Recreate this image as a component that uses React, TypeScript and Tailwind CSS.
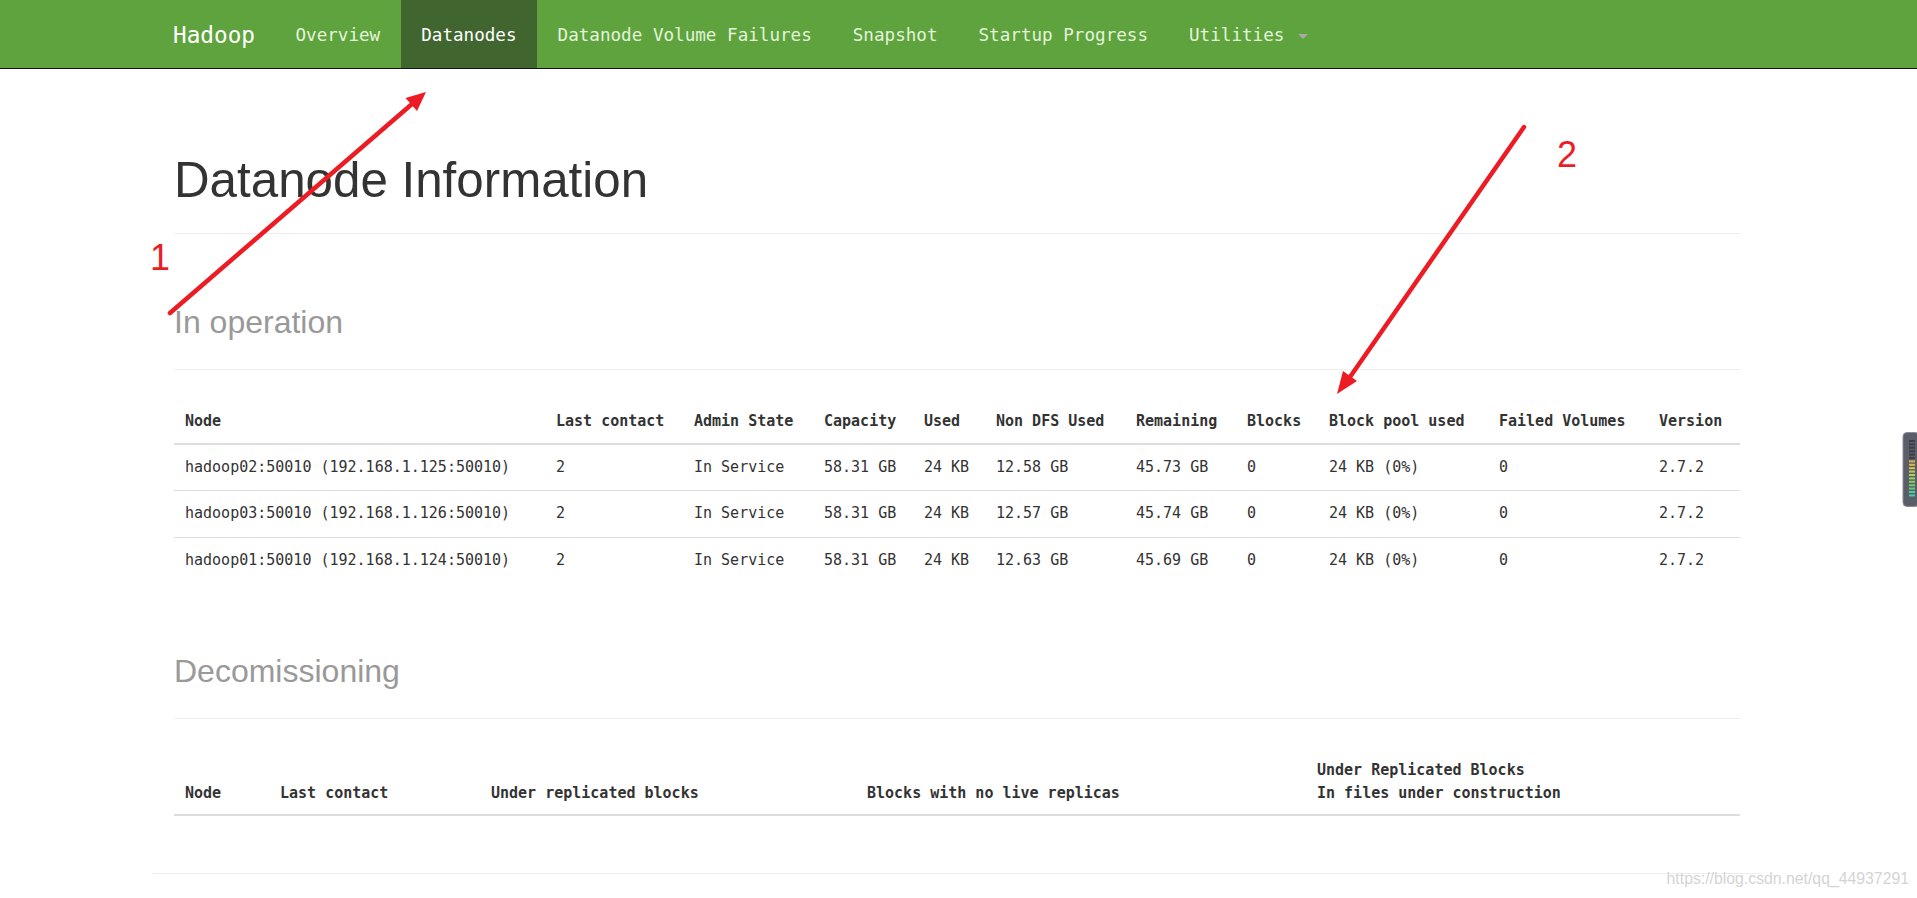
import React from 'react';

const mono = { fontFamily: '"DejaVu Sans Mono", "Liberation Mono", monospace' };
const sans = { fontFamily: '"Liberation Sans", Arial, Helvetica, sans-serif' };

const navItems = ['Overview', 'Datanodes', 'Datanode Volume Failures', 'Snapshot', 'Startup Progress'];

const liveCols = [
  { label: 'Node', w: 'w-[371px]' },
  { label: 'Last contact', w: 'w-[138px]' },
  { label: 'Admin State', w: 'w-[130px]' },
  { label: 'Capacity', w: 'w-[100px]' },
  { label: 'Used', w: 'w-[72px]' },
  { label: 'Non DFS Used', w: 'w-[140px]' },
  { label: 'Remaining', w: 'w-[111px]' },
  { label: 'Blocks', w: 'w-[82px]' },
  { label: 'Block pool used', w: 'w-[170px]' },
  { label: 'Failed Volumes', w: 'w-[160px]' },
  { label: 'Version', w: 'w-[92px]' },
];

const nodes = [
  ['hadoop02:50010 (192.168.1.125:50010)', '2', 'In Service', '58.31 GB', '24 KB', '12.58 GB', '45.73 GB', '0', '24 KB (0%)', '0', '2.7.2'],
  ['hadoop03:50010 (192.168.1.126:50010)', '2', 'In Service', '58.31 GB', '24 KB', '12.57 GB', '45.74 GB', '0', '24 KB (0%)', '0', '2.7.2'],
  ['hadoop01:50010 (192.168.1.124:50010)', '2', 'In Service', '58.31 GB', '24 KB', '12.63 GB', '45.69 GB', '0', '24 KB (0%)', '0', '2.7.2'],
];

const leds = [
  '#3b3e47', '#3b3e47', '#3b3e47', '#3b3e47', '#3b3e47', '#3b3e47',
  '#d8b445', '#d6bd47', '#cfc64a', '#bfcc4d', '#aed253', '#98d259',
  '#86d160', '#72d06c', '#5ecf82', '#4dcf98', '#3fcfae',
];

function Navbar() {
  return (
    <nav className="h-[69px] bg-[#5fa33e] border-b border-[#151515]" style={mono}>
      <div className="ml-[153px] flex h-[68px] items-stretch">
        <a className="flex items-center px-[20px] pt-[3px] text-[22.7px] text-white">Hadoop</a>
        {navItems.map((item) => (
          <a
            key={item}
            className={`flex items-center px-[20.5px] pt-[3px] text-[17.6px] ${
              item === 'Datanodes' ? 'bg-[#41652f] text-white' : 'text-[#e4f3da]'
            }`}
          >
            {item}
          </a>
        ))}
        <a className="flex items-center px-[20.5px] pt-[3px] text-[17.6px] text-[#e4f3da]">
          Utilities
          <span className="ml-[14px] mt-[2px] h-0 w-0 border-x-[5.5px] border-t-[5.5px] border-x-transparent border-t-[#a9a9a9]" />
        </a>
      </div>
    </nav>
  );
}

function PageHeader({ children, small }: { children: React.ReactNode; small?: boolean }) {
  return (
    <div className="border-b border-[#eeeeee] pb-[26px]" style={sans}>
      <h1 className="h-[54px] text-[49.3px] font-normal leading-[54px] text-[#333333]">
        {small ? <span className="text-[32px] leading-none text-[#999999]">{children}</span> : children}
      </h1>
    </div>
  );
}

export default function App() {
  return (
    <div className="relative h-[898px] overflow-hidden bg-white text-[#333333]">
      <Navbar />

      <div className="ml-[153px] w-[1608px] px-[21px]">
        <div className="mt-[84px]">
          <PageHeader>Datanode Information</PageHeader>
        </div>

        <div className="mt-[55px]">
          <PageHeader small>In operation</PageHeader>
        </div>

        <table className="mt-[27px] w-full table-fixed border-collapse text-[15px]" style={mono}>
          <thead>
            <tr>
              {liveCols.map((c) => (
                <th
                  key={c.label}
                  className={`${c.w} border-b-2 border-[#dddddd] px-[11px] pt-[13px] pb-[9px] text-left align-bottom font-bold leading-[23.5px] whitespace-nowrap`}
                >
                  {c.label}
                </th>
              ))}
            </tr>
          </thead>
          <tbody>
            {nodes.map((row, i) => (
              <tr key={i}>
                {row.map((cell, j) => (
                  <td
                    key={j}
                    className={`px-[11px] py-[11px] leading-[23.5px] whitespace-nowrap ${
                      i === 0 ? '' : 'border-t border-[#dddddd]'
                    }`}
                  >
                    {cell}
                  </td>
                ))}
              </tr>
            ))}
          </tbody>
        </table>

        <div className="mt-[55px]">
          <PageHeader small>Decomissioning</PageHeader>
        </div>

        <table className="mt-[27px] w-full table-fixed border-collapse text-[15px]" style={mono}>
          <thead>
            <tr>
              <th className="w-[95px] border-b-2 border-[#dddddd] px-[11px] pt-[13px] pb-[9px] text-left align-bottom font-bold leading-[23px]">Node</th>
              <th className="w-[211px] border-b-2 border-[#dddddd] px-[11px] pt-[13px] pb-[9px] text-left align-bottom font-bold leading-[23px]">Last contact</th>
              <th className="w-[376px] border-b-2 border-[#dddddd] px-[11px] pt-[13px] pb-[9px] text-left align-bottom font-bold leading-[23px]">Under replicated blocks</th>
              <th className="w-[450px] border-b-2 border-[#dddddd] px-[11px] pt-[13px] pb-[9px] text-left align-bottom font-bold leading-[23px]">Blocks with no live replicas</th>
              <th className="border-b-2 border-[#dddddd] px-[11px] pt-[13px] pb-[9px] text-left align-bottom font-bold leading-[23px]">
                Under Replicated Blocks
                <br />
                In files under construction
              </th>
            </tr>
          </thead>
          <tbody />
        </table>
      </div>

      <hr className="ml-[153px] mt-[57px] w-[1608px] border-t border-[#eeeeee]" />

      {/* screenshot annotations */}
      <svg className="pointer-events-none absolute left-0 top-0" width="1917" height="898">
        <line x1="170" y1="313" x2="412" y2="104" stroke="#ed1c24" strokeWidth="4.5" strokeLinecap="round" />
        <polygon points="426,92 417,111 405.5,98" fill="#ed1c24" />
        <line x1="1524" y1="127" x2="1350" y2="377" stroke="#ed1c24" strokeWidth="4.5" strokeLinecap="round" />
        <polygon points="1337,394 1343,371 1357,381" fill="#ed1c24" />
        <text x="150" y="270" fill="#ed1c24" fontSize="36" style={sans}>1</text>
        <text x="1557" y="167" fill="#ed1c24" fontSize="36" style={sans}>2</text>
      </svg>

      {/* level meter widget at the right edge */}
      <svg className="pointer-events-none absolute left-[1902px] top-[432px]" width="15" height="75">
        <rect x="1" y="0.5" width="16" height="74" rx="4" fill="#5b5e69" stroke="#8a8d96" strokeWidth="1" />
        {leds.map((c, i) => (
          <rect key={i} x="7" y={8 + i * 3.4} width="6" height="2" fill={c} />
        ))}
      </svg>

      <div
        className="pointer-events-none absolute right-[8px] top-[869px] text-[15.8px] leading-[20px] text-[#d4d4d4]"
        style={sans}
      >
        https://blog.csdn.net/qq_44937291
      </div>
    </div>
  );
}
